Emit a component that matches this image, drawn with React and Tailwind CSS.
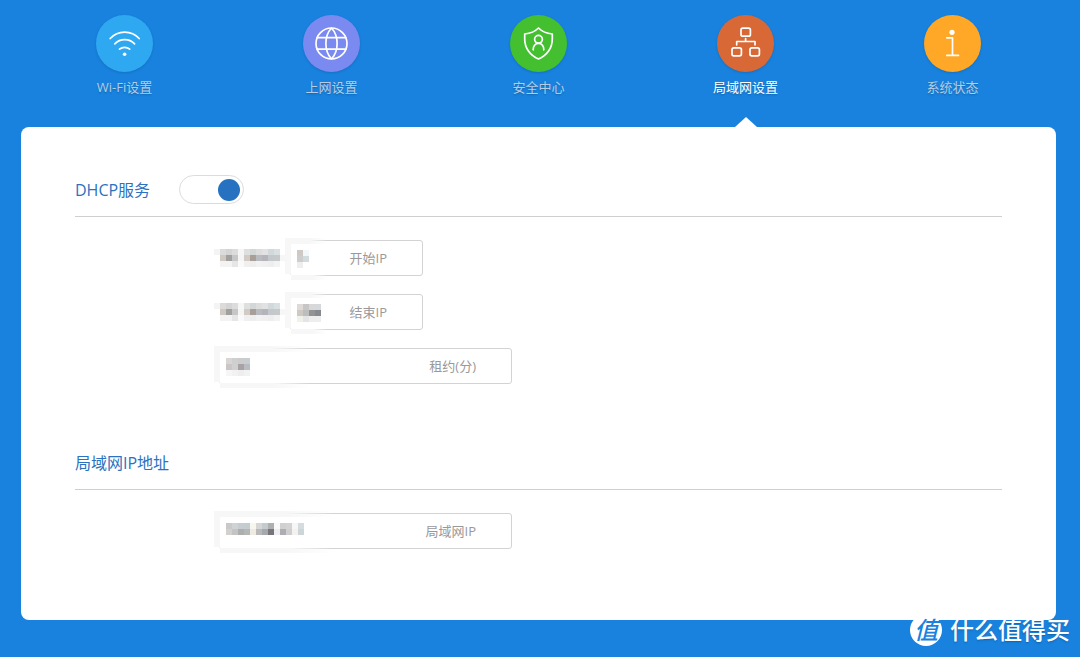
import { useState } from 'react';

const tabs = [
    { id: 'wifi', label: 'Wi-Fi设置', color: 'bg-[#2fa8f2]' },
    { id: 'internet', label: '上网设置', color: 'bg-[#7b8af0]' },
    { id: 'security', label: '安全中心', color: 'bg-[#43bf30]' },
    { id: 'lan', label: '局域网设置', color: 'bg-[#d86836]' },
    { id: 'status', label: '系统状态', color: 'bg-[#ffa726]' },
];

// masked values, one colour per cell
const prefixMask = [
    ['#f4f4f4', '#dddbda', '#d4d4d4', '#dcdcdc', '#f6f6f6', '#dee0e0', '#d3d7d7', '#dddddd', '#e2e2e2', '#d3d8da', '#d8e0e2', '#ffffff'],
    ['#ffffff', '#cfc8c0', '#a0a0a0', '#c6c6c6', '#f5f5f5', '#d2cac4', '#a89f99', '#b8bbbf', '#b4b4ba', '#c4c8cc', '#c6c9c9', '#f6f6f6'],
    ['#ffffff', '#f3f3f3', '#f3f3f3', '#e6e6e6', '#fafafa', '#f0f0f0', '#eeeeee', '#f2f2f2', '#f0f0f0', '#eeeeee', '#f3f3f3', '#ffffff'],
];
const startMask = [
    ['#cfc9c6', '#f2f7f9'],
    ['#cecccc', '#d2dcde'],
    ['#eeeeee', '#ffffff'],
];
const endMask = [
    ['#dedad7', '#c6c6c6', '#d8d8d8', '#d5d9dd'],
    ['#cfc9c3', '#bdbdbd', '#929395', '#868a90'],
    ['#f1f1ec', '#e5e5e5', '#eeeeee', '#eeeeee'],
];
const leaseMask = [
    ['#d9d5d5', '#cfcfcf', '#cccccc', '#c8cdd2'],
    ['#cbc6c6', '#d0d0d0', '#a8a1a5', '#b8bdc4'],
    ['#f6f6f6', '#f2f2f2', '#eeeeee', '#f2f2f2'],
];
const lanMask = [
    ['#c9c9c9', '#cfd3d3', '#c6cdd0', '#c3cccf', '#f8f7ee', '#d6d6d6', '#c3cbce', '#adafb1', '#fafafa', '#d2cfcf', '#d3d3d3', '#f6f6f6', '#d5dcdd'],
    ['#d3d1cd', '#c4c4c4', '#adafaf', '#b5b7b7', '#eeece2', '#b9b9b9', '#a5a9ae', '#77757a', '#eceef0', '#aeadb2', '#cfcfcf', '#f5f1ee', '#ccd6d9'],
];

const TabIcon = ({ id }) => (
    <svg viewBox="0 0 57 57" className="w-full h-full" fill="none" stroke="white" strokeWidth="1.7" strokeLinecap="round" strokeLinejoin="round">
        {id === 'wifi' && (
            <>
                <path d="M14.2 23.5A19.5 19.5 0 0 1 43.2 23.5" />
                <path d="M18.8 28.8A13.8 13.8 0 0 1 38.6 28.8" />
                <path d="M23.5 34.2A7.8 7.8 0 0 1 33.7 34.2" />
                <circle cx="28.6" cy="39.2" r="1.8" fill="white" stroke="none" />
            </>
        )}
        {id === 'internet' && (
            <>
                <circle cx="28.5" cy="28.5" r="15.5" />
                <path d="M28.5 13C21 21 21 36 28.5 44C36 36 36 21 28.5 13Z" />
                <path d="M14.2 22.6H42.8M14.2 34.2H42.8" />
            </>
        )}
        {id === 'security' && (
            <>
                <path d="M28.5 13C25 16.5 19.5 18.5 14.7 19V24C14.7 33 20 40.5 28.5 44C37 40.5 42.3 33 42.3 24V19C37.5 18.5 32 16.5 28.5 13Z" />
                <circle cx="28.5" cy="24.3" r="3.9" />
                <path d="M23.2 34.8C23 31 25.2 28.4 28.5 28.4S34 31 33.8 34.8" />
            </>
        )}
        {id === 'lan' && (
            <>
                <rect x="24" y="13.2" width="9.4" height="8" rx="1.8" />
                <rect x="15" y="32.8" width="9.4" height="8" rx="1.8" />
                <rect x="33" y="32.8" width="9.4" height="8" rx="1.8" />
                <path d="M28.6 23.5V26.5M19.7 29.8V26.5H38V29.8" />
            </>
        )}
        {id === 'status' && (
            <>
                <circle cx="28" cy="17.3" r="2.6" fill="white" stroke="none" />
                <path d="M22.8 22.8H28.5V40.4M22.8 40.4H34.5" />
            </>
        )}
    </svg>
);

const Cells = ({ rows, x = 0, y = 0 }) =>
    rows.map((row, r) =>
        row.map((fill, c) => (
            <rect key={`${r}-${c}`} x={x + c * 6} y={y + r * 6} width="6" height="6" fill={fill} shapeRendering="crispEdges" />
        ))
    );

// covers the left end of a field and fades out to the right
const FieldMask = ({ id, rows, width }) => (
    <svg width={width} height="42" className="absolute -left-1.5 -top-[3px] pointer-events-none" aria-hidden="true">
        <defs>
            <linearGradient id={`${id}-halo`}>
                <stop offset="0.6" stopColor="#f7f7f7" />
                <stop offset="1" stopColor="#f7f7f7" stopOpacity="0" />
            </linearGradient>
        </defs>
        <rect width={width} height="36" fill={`url(#${id}-halo)`} />
        <rect x="6" y="36" width={width - 6} height="6" fill={`url(#${id}-halo)`} />
        <rect x="6" y="6" width={width - 6} height="31" fill="white" />
        <Cells rows={rows} x={12} y={12} />
    </svg>
);

const Field = ({ id, label, rows, maskWidth, className }) => (
    <div className={`relative flex items-center h-9 border border-[#d3d3d3] rounded-[3px] ${className}`}>
        <input id={id} type="text" className="flex-1 min-w-0 h-full pl-2 bg-transparent outline-none text-[13px]" />
        <FieldMask id={id} rows={rows} width={maskWidth} />
        <label htmlFor={id} className="pr-[35px] text-[13px] leading-5 text-[#999]">{label}</label>
    </div>
);

const Prefix = () => (
    <svg width="72" height="18" className="mr-1 shrink-0" aria-hidden="true">
        <Cells rows={prefixMask} />
    </svg>
);

const App = () => {
    const [active, setActive] = useState('lan');
    const [dhcp, setDhcp] = useState(true);

    return (
        <div className="relative min-h-screen bg-[#1882de] pl-[21px] pr-6 pb-[37px] font-['Open_Sans','Noto_Sans_CJK_SC',sans-serif]">
            <nav className="grid grid-cols-5">
                {tabs.map((tab) => (
                    <button
                        key={tab.id}
                        type="button"
                        onClick={() => setActive(tab.id)}
                        className="relative flex flex-col items-center pt-[15px] pb-[30px]"
                    >
                        <span className={`w-[57px] h-[57px] rounded-full shadow-sm ${tab.color}`}>
                            <TabIcon id={tab.id} />
                        </span>
                        <span className={`mt-[5px] text-[13px] leading-5 text-shadow-sm ${active === tab.id ? 'text-white' : 'text-[#b4cde4]'}`}>
                            {tab.label}
                        </span>
                        {active === tab.id && (
                            <svg width="22" height="10" viewBox="0 0 22 10" className="absolute bottom-0" aria-hidden="true">
                                <path d="M0 10L11 0L22 10Z" fill="white" />
                            </svg>
                        )}
                    </button>
                ))}
            </nav>

            <main className="bg-white rounded-lg px-[54px] pt-9 pb-[71px]">
                <section>
                    <div className="flex items-center h-[54px] border-b border-[#cfcfcf]">
                        <label htmlFor="dhcp" className="text-base text-[#2b72c0]">DHCP服务</label>
                        <input
                            id="dhcp"
                            type="checkbox"
                            checked={dhcp}
                            onChange={(e) => setDhcp(e.target.checked)}
                            className="ml-[29px] flex items-center appearance-none w-[65px] h-[29px] px-[3px] rounded-full border border-[#dcdcdc] before:block before:w-[22px] before:h-[22px] before:rounded-full before:bg-[#bbb] checked:justify-end checked:before:bg-[#2672c0]"
                        />
                    </div>
                    <div className="flex flex-col gap-[18px] pt-[23px]">
                        <div className="flex items-center pl-[139px]">
                            <Prefix />
                            <Field id="start-ip" label="开始IP" rows={startMask} maskWidth={42} className="w-[133px]" />
                        </div>
                        <div className="flex items-center pl-[139px]">
                            <Prefix />
                            <Field id="end-ip" label="结束IP" rows={endMask} maskWidth={42} className="w-[133px]" />
                        </div>
                        <div className="pl-36">
                            <Field id="lease" label="租约(分)" rows={leaseMask} maskWidth={96} className="w-[293px]" />
                        </div>
                    </div>
                </section>

                <section className="pt-[52px]">
                    <div className="flex items-center h-[54px] border-b border-[#cfcfcf]">
                        <h2 className="text-base text-[#2b72c0]">局域网IP地址</h2>
                    </div>
                    <div className="pt-[23px] pl-36">
                        <Field id="lan-ip" label="局域网IP" rows={lanMask} maskWidth={120} className="w-[293px]" />
                    </div>
                </section>
            </main>

            <div className="absolute right-2.5 bottom-[11px] flex items-center gap-2 text-white">
                <span className="flex items-center justify-center w-8 h-8 rounded-full bg-white text-[#1882de] text-2xl leading-8 italic font-medium">值</span>
                <span className="text-2xl leading-8 font-medium text-shadow-sm">什么值得买</span>
            </div>
        </div>
    );
};

export default App;
